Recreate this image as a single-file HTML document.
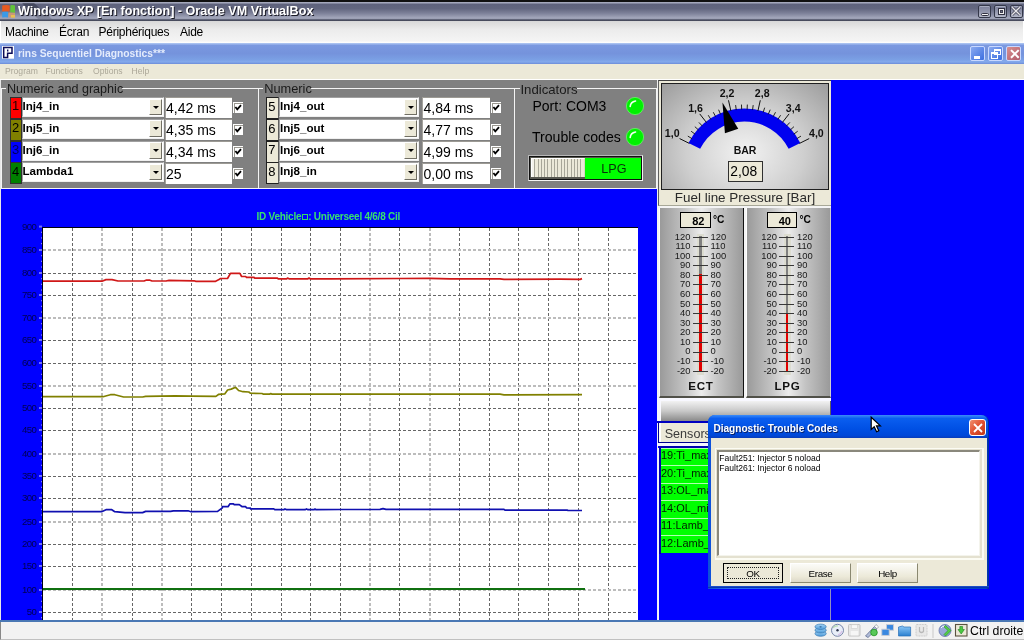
<!DOCTYPE html><html><head><meta charset="utf-8"><style>
html,body{margin:0;padding:0;width:1024px;height:640px;overflow:hidden;background:#0000ff;}
*{box-sizing:border-box;} body{position:relative;will-change:transform;font-family:'Liberation Sans',sans-serif;}
</style></head><body>
<div style="position:absolute;left:0px;top:0px;width:1024px;height:2px;background:#101010;"></div>
<div style="position:absolute;left:0px;top:2px;width:1024px;height:19px;background:linear-gradient(#a4a8bc 0%,#a4a8bc 6%,#5e627c 10%,#62667f 35%,#7e829a 60%,#a6aabe 86%,#585c70 93%,#3e4252 100%);"></div>
<div style="position:absolute;left:0;top:3px;width:70px;height:16px;background:linear-gradient(rgba(30,34,50,0.45),rgba(30,34,50,0.2));clip-path:polygon(22px 0,34px 0,52px 100%,38px 100%);"></div>
<svg style="position:absolute;left:0;top:0" width="18" height="20"><path d="M2.2 5.6 Q6 4.6 9.8 5.4 L9.6 11.4 Q6 10.8 2.2 11.6Z" fill="#e85a20"/><path d="M10.4 5.2 Q13 4.8 15 5.4 L15 13 Q13 12.4 10.2 12.6Z" fill="#62c43a"/><path d="M2.2 12 Q5 11.4 8 12 L8 17.6 Q5 17 2.2 17.6Z" fill="#3a9ae8"/><path d="M8.4 12.4 L15 12.8 L15 17.6 L8.4 17.6Z" fill="#c89878"/><path d="M11 15 L15 15 L15 17.6 L11 17.6Z" fill="#e8c050"/></svg>
<div style="position:absolute;left:18px;top:4.5px;font-size:12.6px;line-height:1;color:#ffffff;font-weight:bold;white-space:nowrap;text-shadow:1px 1px 0.6px #1a1a24;">Windows XP [En fonction] - Oracle VM VirtualBox</div>
<div style="position:absolute;left:977.5px;top:4.5px;width:13.5px;height:13.5px;background:linear-gradient(#7c809a,#9498ae 55%,#b4b8c8);border:1px solid #34384a;border-radius:2px;box-shadow:inset 0 1px 0 #a8acc0;"><div style="position:absolute;left:2.6px;top:7.2px;width:7.6px;height:3px;background:#f4f4f4;border:0.8px solid #303040;border-radius:1.5px;"></div></div>
<div style="position:absolute;left:993.5px;top:4.5px;width:13.5px;height:13.5px;background:linear-gradient(#7c809a,#9498ae 55%,#b4b8c8);border:1px solid #34384a;border-radius:2px;box-shadow:inset 0 1px 0 #a8acc0;"><div style="position:absolute;left:3px;top:2px;width:7.5px;height:7.5px;border:0.8px solid #303040;background:#f0f0f0;"><div style="position:absolute;left:1.2px;top:1.2px;right:1.2px;bottom:1.2px;background:#6a6e84;border:0.6px solid #404050;"></div></div></div>
<div style="position:absolute;left:1009.5px;top:4.5px;width:13.5px;height:13.5px;background:linear-gradient(#7c809a,#9498ae 55%,#b4b8c8);border:1px solid #34384a;border-radius:2px;box-shadow:inset 0 1px 0 #a8acc0;"><svg style="position:absolute;left:-0.2px;top:-0.2px" width="12" height="12"><path d="M2.2 2.2 L9.8 9.8 M9.8 2.2 L2.2 9.8" stroke="#404050" stroke-width="2.8"/><path d="M2.2 2.2 L9.8 9.8 M9.8 2.2 L2.2 9.8" stroke="#e8e8ec" stroke-width="1.3"/></svg></div>
<div style="position:absolute;left:0px;top:21px;width:1024px;height:22px;background:linear-gradient(#d8d8d8,#ececec 40%,#f4f4f4 90%,#ffffff);border-left:1px solid #fff;border-right:1px solid #fff;"></div>
<div style="position:absolute;left:5px;top:26.3px;font-size:12px;line-height:1;color:#000;font-weight:normal;white-space:nowrap;letter-spacing:-0.25px;">Machine</div>
<div style="position:absolute;left:59px;top:26.3px;font-size:12px;line-height:1;color:#000;font-weight:normal;white-space:nowrap;letter-spacing:-0.25px;">Écran</div>
<div style="position:absolute;left:98.5px;top:26.3px;font-size:12px;line-height:1;color:#000;font-weight:normal;white-space:nowrap;letter-spacing:-0.25px;">Périphériques</div>
<div style="position:absolute;left:180px;top:26.3px;font-size:12px;line-height:1;color:#000;font-weight:normal;white-space:nowrap;letter-spacing:-0.25px;">Aide</div>
<div style="position:absolute;left:0px;top:43px;width:1024px;height:21px;background:linear-gradient(#b4cbf4 0%,#7a98e0 12%,#7593dc 50%,#7a9fe4 78%,#84aaec 90%,#6c8cd8 100%);"></div>
<svg style="position:absolute;left:0;top:42px" width="16" height="20"><rect x="2" y="4" width="12" height="12.7" fill="#fff"/><path d="M3.7 5.6 L12 5.6 L12 11.2 L7.6 11.2 L7.6 15.4 L3.7 15.4 Z" fill="#fff" stroke="#0c0c58" stroke-width="1.5"/><rect x="7" y="7.5" width="1.4" height="2" fill="#0c0c58"/></svg>
<div style="position:absolute;left:18px;top:49.3px;font-size:10.3px;line-height:1;color:#e4ecfc;font-weight:bold;white-space:nowrap;">rins Sequentiel Diagnostics***</div>
<div style="position:absolute;left:970px;top:46px;width:15px;height:15px;background:linear-gradient(135deg,#8aaaf0,#3d6fe0);border:1px solid #c8d8ff;border-radius:2px;"><div style="position:absolute;left:3px;top:9px;width:6px;height:3px;background:#fff;"></div></div>
<div style="position:absolute;left:988px;top:46px;width:15px;height:15px;background:linear-gradient(135deg,#8aaaf0,#3d6fe0);border:1px solid #c8d8ff;border-radius:2px;"><div style="position:absolute;left:5px;top:2px;width:7px;height:6px;border:1px solid #fff;border-top-width:2px;"></div><div style="position:absolute;left:2px;top:5px;width:7px;height:7px;border:1px solid #fff;border-top-width:2px;background:transparent;"></div></div>
<div style="position:absolute;left:1006px;top:46px;width:15px;height:15px;background:linear-gradient(135deg,#d89090,#b05a6a);border:1px solid #c8d8ff;border-radius:2px;"><div style="position:absolute;left:0;top:0px;width:15px;font-size:14px;color:#fff;text-align:center;line-height:15px;font-weight:bold;">✕</div></div>
<div style="position:absolute;left:0px;top:64px;width:1024px;height:16px;background:#ece9d8;border-bottom:1px solid #fff;"></div>
<div style="position:absolute;left:5px;top:67px;font-size:8.6px;line-height:1;color:#aca899;font-weight:normal;white-space:nowrap;">Program</div>
<div style="position:absolute;left:45.5px;top:67px;font-size:8.6px;line-height:1;color:#aca899;font-weight:normal;white-space:nowrap;">Functions</div>
<div style="position:absolute;left:93px;top:67px;font-size:8.6px;line-height:1;color:#aca899;font-weight:normal;white-space:nowrap;">Options</div>
<div style="position:absolute;left:131.5px;top:67px;font-size:8.6px;line-height:1;color:#aca899;font-weight:normal;white-space:nowrap;">Help</div>
<div style="position:absolute;left:1px;top:80px;width:657px;height:109px;background:#808080;"></div>
<div style="position:absolute;left:1px;top:187.8px;width:657px;height:1.7px;background:#f4f4f8;"></div>
<div style="position:absolute;left:0px;top:80px;width:1px;height:540px;background:#e8e8e8;"></div>
<div style="position:absolute;left:1px;top:88px;width:656px;height:1px;background:#f4f4f4;"></div>
<div style="position:absolute;left:1px;top:88px;width:1px;height:100px;background:#f4f4f4;"></div>
<div style="position:absolute;left:258px;top:88px;width:1px;height:100px;background:#f4f4f4;"></div>
<div style="position:absolute;left:514px;top:88px;width:1px;height:100px;background:#f4f4f4;"></div>
<div style="position:absolute;left:656px;top:88px;width:1px;height:100px;background:#f4f4f4;"></div>
<div style="position:absolute;left:6px;top:86px;width:116px;height:4px;background:#808080;"></div>
<div style="position:absolute;left:262.5px;top:86px;width:48.5px;height:4px;background:#808080;"></div>
<div style="position:absolute;left:519.5px;top:86px;width:57.0px;height:4px;background:#808080;"></div>
<div style="position:absolute;left:7px;top:82.6px;font-size:12.6px;line-height:1;color:#1a1a1a;font-weight:normal;white-space:nowrap;">Numeric and graphic</div>
<div style="position:absolute;left:264.2px;top:82.6px;font-size:12.8px;line-height:1;color:#1a1a1a;font-weight:normal;white-space:nowrap;">Numeric</div>
<div style="position:absolute;left:520.4px;top:82.6px;font-size:13.2px;line-height:1;color:#1a1a1a;font-weight:normal;white-space:nowrap;">Indicators</div>
<div style="position:absolute;left:9.5px;top:97.2px;width:12.5px;height:22.2px;background:#ff0000;border:1px solid #303030;"><div style="position:absolute;left:1.5px;top:1.3px;font-size:13px;line-height:1;color:#200000;">1</div></div>
<div style="position:absolute;left:21.5px;top:97.2px;width:142px;height:20px;background:#fff;border-top:1px solid #a0a0a0;border-left:1px solid #a0a0a0;border-bottom:1px solid #f0f0f0;border-right:1px solid #f0f0f0;"></div>
<div style="position:absolute;left:22.5px;top:100.3px;font-size:11.6px;line-height:1;color:#000;font-weight:bold;white-space:nowrap;">Inj4_in</div>
<div style="position:absolute;left:148.5px;top:98.7px;width:13px;height:16.5px;background:#ece9d8;border-top:1px solid #fff;border-left:1px solid #fff;border-bottom:1px solid #716f64;border-right:1px solid #716f64;"><div style="position:absolute;left:3px;top:6px;width:0;height:0;border-left:3px solid transparent;border-right:3px solid transparent;border-top:3px solid #000;"></div></div>
<div style="position:absolute;left:164.5px;top:97.3px;width:67.5px;height:20.6px;background:#fff;border-top:1.6px solid #9c9a94;border-left:1.4px solid #a4a29c;"></div>
<div style="position:absolute;left:166.0px;top:100.8px;font-size:14px;line-height:1;color:#000;font-weight:normal;white-space:nowrap;">4,42 ms</div>
<div style="position:absolute;left:233px;top:102.3px;width:10px;height:11px;background:#fff;box-shadow:inset 1px 1px 0 #fff,inset 2px 2px 0 #9a9890;"><svg style="position:absolute;left:0;top:0" width="10" height="11"><path d="M2.4 5 L4.3 7.3 L8 3.2" stroke="#000" stroke-width="1.8" fill="none"/></svg></div>
<div style="position:absolute;left:266px;top:97.2px;width:13px;height:22.2px;background:#ece9d8;border:1px solid #202020;border-right-color:#606060;"><div style="position:absolute;left:1.2px;top:1.8px;font-size:13px;line-height:1;color:#000;">5</div></div>
<div style="position:absolute;left:279px;top:97.2px;width:140px;height:20px;background:#fff;border-top:1px solid #a0a0a0;border-left:1px solid #a0a0a0;border-bottom:1px solid #f0f0f0;border-right:1px solid #f0f0f0;"></div>
<div style="position:absolute;left:280px;top:100.3px;font-size:11.6px;line-height:1;color:#000;font-weight:bold;white-space:nowrap;">Inj4_out</div>
<div style="position:absolute;left:404px;top:98.7px;width:13px;height:16.5px;background:#ece9d8;border-top:1px solid #fff;border-left:1px solid #fff;border-bottom:1px solid #716f64;border-right:1px solid #716f64;"><div style="position:absolute;left:3px;top:6px;width:0;height:0;border-left:3px solid transparent;border-right:3px solid transparent;border-top:3px solid #000;"></div></div>
<div style="position:absolute;left:422px;top:97.3px;width:67.5px;height:20.6px;background:#fff;border-top:1.6px solid #9c9a94;border-left:1.4px solid #a4a29c;"></div>
<div style="position:absolute;left:423.5px;top:100.8px;font-size:14px;line-height:1;color:#000;font-weight:normal;white-space:nowrap;">4,84 ms</div>
<div style="position:absolute;left:491px;top:101.7px;width:10px;height:11px;background:#fff;box-shadow:inset 1px 1px 0 #fff,inset 2px 2px 0 #9a9890;"><svg style="position:absolute;left:0;top:0" width="10" height="11"><path d="M2.4 5 L4.3 7.3 L8 3.2" stroke="#000" stroke-width="1.8" fill="none"/></svg></div>
<div style="position:absolute;left:9.5px;top:118.9px;width:12.5px;height:22.2px;background:#808000;border:1px solid #303030;"><div style="position:absolute;left:1.5px;top:1.3px;font-size:13px;line-height:1;color:#000;">2</div></div>
<div style="position:absolute;left:21.5px;top:118.9px;width:142px;height:20px;background:#fff;border-top:1px solid #a0a0a0;border-left:1px solid #a0a0a0;border-bottom:1px solid #f0f0f0;border-right:1px solid #f0f0f0;"></div>
<div style="position:absolute;left:22.5px;top:122.0px;font-size:11.6px;line-height:1;color:#000;font-weight:bold;white-space:nowrap;">Inj5_in</div>
<div style="position:absolute;left:148.5px;top:120.4px;width:13px;height:16.5px;background:#ece9d8;border-top:1px solid #fff;border-left:1px solid #fff;border-bottom:1px solid #716f64;border-right:1px solid #716f64;"><div style="position:absolute;left:3px;top:6px;width:0;height:0;border-left:3px solid transparent;border-right:3px solid transparent;border-top:3px solid #000;"></div></div>
<div style="position:absolute;left:164.5px;top:119.3px;width:67.5px;height:20.6px;background:#fff;border-top:1.6px solid #9c9a94;border-left:1.4px solid #a4a29c;"></div>
<div style="position:absolute;left:166.0px;top:122.8px;font-size:14px;line-height:1;color:#000;font-weight:normal;white-space:nowrap;">4,35 ms</div>
<div style="position:absolute;left:233px;top:124.3px;width:10px;height:11px;background:#fff;box-shadow:inset 1px 1px 0 #fff,inset 2px 2px 0 #9a9890;"><svg style="position:absolute;left:0;top:0" width="10" height="11"><path d="M2.4 5 L4.3 7.3 L8 3.2" stroke="#000" stroke-width="1.8" fill="none"/></svg></div>
<div style="position:absolute;left:266px;top:118.9px;width:13px;height:22.2px;background:#ece9d8;border:1px solid #202020;border-right-color:#606060;"><div style="position:absolute;left:1.2px;top:1.8px;font-size:13px;line-height:1;color:#000;">6</div></div>
<div style="position:absolute;left:279px;top:118.9px;width:140px;height:20px;background:#fff;border-top:1px solid #a0a0a0;border-left:1px solid #a0a0a0;border-bottom:1px solid #f0f0f0;border-right:1px solid #f0f0f0;"></div>
<div style="position:absolute;left:280px;top:122.0px;font-size:11.6px;line-height:1;color:#000;font-weight:bold;white-space:nowrap;">Inj5_out</div>
<div style="position:absolute;left:404px;top:120.4px;width:13px;height:16.5px;background:#ece9d8;border-top:1px solid #fff;border-left:1px solid #fff;border-bottom:1px solid #716f64;border-right:1px solid #716f64;"><div style="position:absolute;left:3px;top:6px;width:0;height:0;border-left:3px solid transparent;border-right:3px solid transparent;border-top:3px solid #000;"></div></div>
<div style="position:absolute;left:422px;top:119.3px;width:67.5px;height:20.6px;background:#fff;border-top:1.6px solid #9c9a94;border-left:1.4px solid #a4a29c;"></div>
<div style="position:absolute;left:423.5px;top:122.8px;font-size:14px;line-height:1;color:#000;font-weight:normal;white-space:nowrap;">4,77 ms</div>
<div style="position:absolute;left:491px;top:123.7px;width:10px;height:11px;background:#fff;box-shadow:inset 1px 1px 0 #fff,inset 2px 2px 0 #9a9890;"><svg style="position:absolute;left:0;top:0" width="10" height="11"><path d="M2.4 5 L4.3 7.3 L8 3.2" stroke="#000" stroke-width="1.8" fill="none"/></svg></div>
<div style="position:absolute;left:9.5px;top:140.6px;width:12.5px;height:22.2px;background:#0000ff;border:1px solid #303030;"><div style="position:absolute;left:1.5px;top:1.3px;font-size:13px;line-height:1;color:#000060;">3</div></div>
<div style="position:absolute;left:21.5px;top:140.6px;width:142px;height:20px;background:#fff;border-top:1px solid #a0a0a0;border-left:1px solid #a0a0a0;border-bottom:1px solid #f0f0f0;border-right:1px solid #f0f0f0;"></div>
<div style="position:absolute;left:22.5px;top:143.7px;font-size:11.6px;line-height:1;color:#000;font-weight:bold;white-space:nowrap;">Inj6_in</div>
<div style="position:absolute;left:148.5px;top:142.1px;width:13px;height:16.5px;background:#ece9d8;border-top:1px solid #fff;border-left:1px solid #fff;border-bottom:1px solid #716f64;border-right:1px solid #716f64;"><div style="position:absolute;left:3px;top:6px;width:0;height:0;border-left:3px solid transparent;border-right:3px solid transparent;border-top:3px solid #000;"></div></div>
<div style="position:absolute;left:164.5px;top:141.3px;width:67.5px;height:20.6px;background:#fff;border-top:1.6px solid #9c9a94;border-left:1.4px solid #a4a29c;"></div>
<div style="position:absolute;left:166.0px;top:144.8px;font-size:14px;line-height:1;color:#000;font-weight:normal;white-space:nowrap;">4,34 ms</div>
<div style="position:absolute;left:233px;top:146.3px;width:10px;height:11px;background:#fff;box-shadow:inset 1px 1px 0 #fff,inset 2px 2px 0 #9a9890;"><svg style="position:absolute;left:0;top:0" width="10" height="11"><path d="M2.4 5 L4.3 7.3 L8 3.2" stroke="#000" stroke-width="1.8" fill="none"/></svg></div>
<div style="position:absolute;left:266px;top:140.6px;width:13px;height:22.2px;background:#ece9d8;border:1px solid #202020;border-right-color:#606060;"><div style="position:absolute;left:1.2px;top:1.8px;font-size:13px;line-height:1;color:#000;">7</div></div>
<div style="position:absolute;left:279px;top:140.6px;width:140px;height:20px;background:#fff;border-top:1px solid #a0a0a0;border-left:1px solid #a0a0a0;border-bottom:1px solid #f0f0f0;border-right:1px solid #f0f0f0;"></div>
<div style="position:absolute;left:280px;top:143.7px;font-size:11.6px;line-height:1;color:#000;font-weight:bold;white-space:nowrap;">Inj6_out</div>
<div style="position:absolute;left:404px;top:142.1px;width:13px;height:16.5px;background:#ece9d8;border-top:1px solid #fff;border-left:1px solid #fff;border-bottom:1px solid #716f64;border-right:1px solid #716f64;"><div style="position:absolute;left:3px;top:6px;width:0;height:0;border-left:3px solid transparent;border-right:3px solid transparent;border-top:3px solid #000;"></div></div>
<div style="position:absolute;left:422px;top:141.3px;width:67.5px;height:20.6px;background:#fff;border-top:1.6px solid #9c9a94;border-left:1.4px solid #a4a29c;"></div>
<div style="position:absolute;left:423.5px;top:144.8px;font-size:14px;line-height:1;color:#000;font-weight:normal;white-space:nowrap;">4,99 ms</div>
<div style="position:absolute;left:491px;top:145.70000000000002px;width:10px;height:11px;background:#fff;box-shadow:inset 1px 1px 0 #fff,inset 2px 2px 0 #9a9890;"><svg style="position:absolute;left:0;top:0" width="10" height="11"><path d="M2.4 5 L4.3 7.3 L8 3.2" stroke="#000" stroke-width="1.8" fill="none"/></svg></div>
<div style="position:absolute;left:9.5px;top:162.3px;width:12.5px;height:22.2px;background:#008000;border:1px solid #303030;"><div style="position:absolute;left:1.5px;top:1.3px;font-size:13px;line-height:1;color:#000;">4</div></div>
<div style="position:absolute;left:21.5px;top:162.3px;width:142px;height:20px;background:#fff;border-top:1px solid #a0a0a0;border-left:1px solid #a0a0a0;border-bottom:1px solid #f0f0f0;border-right:1px solid #f0f0f0;"></div>
<div style="position:absolute;left:22.5px;top:165.4px;font-size:11.6px;line-height:1;color:#000;font-weight:bold;white-space:nowrap;">Lambda1</div>
<div style="position:absolute;left:148.5px;top:163.8px;width:13px;height:16.5px;background:#ece9d8;border-top:1px solid #fff;border-left:1px solid #fff;border-bottom:1px solid #716f64;border-right:1px solid #716f64;"><div style="position:absolute;left:3px;top:6px;width:0;height:0;border-left:3px solid transparent;border-right:3px solid transparent;border-top:3px solid #000;"></div></div>
<div style="position:absolute;left:164.5px;top:163.3px;width:67.5px;height:20.6px;background:#fff;border-top:1.6px solid #9c9a94;border-left:1.4px solid #a4a29c;"></div>
<div style="position:absolute;left:166.0px;top:166.8px;font-size:14px;line-height:1;color:#000;font-weight:normal;white-space:nowrap;">25</div>
<div style="position:absolute;left:233px;top:168.3px;width:10px;height:11px;background:#fff;box-shadow:inset 1px 1px 0 #fff,inset 2px 2px 0 #9a9890;"><svg style="position:absolute;left:0;top:0" width="10" height="11"><path d="M2.4 5 L4.3 7.3 L8 3.2" stroke="#000" stroke-width="1.8" fill="none"/></svg></div>
<div style="position:absolute;left:266px;top:162.3px;width:13px;height:22.2px;background:#ece9d8;border:1px solid #202020;border-right-color:#606060;"><div style="position:absolute;left:1.2px;top:1.8px;font-size:13px;line-height:1;color:#000;">8</div></div>
<div style="position:absolute;left:279px;top:162.3px;width:140px;height:20px;background:#fff;border-top:1px solid #a0a0a0;border-left:1px solid #a0a0a0;border-bottom:1px solid #f0f0f0;border-right:1px solid #f0f0f0;"></div>
<div style="position:absolute;left:280px;top:165.4px;font-size:11.6px;line-height:1;color:#000;font-weight:bold;white-space:nowrap;">Inj8_in</div>
<div style="position:absolute;left:404px;top:163.8px;width:13px;height:16.5px;background:#ece9d8;border-top:1px solid #fff;border-left:1px solid #fff;border-bottom:1px solid #716f64;border-right:1px solid #716f64;"><div style="position:absolute;left:3px;top:6px;width:0;height:0;border-left:3px solid transparent;border-right:3px solid transparent;border-top:3px solid #000;"></div></div>
<div style="position:absolute;left:422px;top:163.3px;width:67.5px;height:20.6px;background:#fff;border-top:1.6px solid #9c9a94;border-left:1.4px solid #a4a29c;"></div>
<div style="position:absolute;left:423.5px;top:166.8px;font-size:14px;line-height:1;color:#000;font-weight:normal;white-space:nowrap;">0,00 ms</div>
<div style="position:absolute;left:491px;top:167.70000000000002px;width:10px;height:11px;background:#fff;box-shadow:inset 1px 1px 0 #fff,inset 2px 2px 0 #9a9890;"><svg style="position:absolute;left:0;top:0" width="10" height="11"><path d="M2.4 5 L4.3 7.3 L8 3.2" stroke="#000" stroke-width="1.8" fill="none"/></svg></div>
<div style="position:absolute;left:532.5px;top:99px;font-size:14px;line-height:1;color:#000;font-weight:normal;white-space:nowrap;">Port: COM3</div>
<div style="position:absolute;left:532px;top:129.5px;font-size:14.1px;line-height:1;color:#000;font-weight:normal;white-space:nowrap;">Trouble codes</div>
<svg style="position:absolute;left:625px;top:95.6px" width="20" height="20"><circle cx="10" cy="10" r="8.6" fill="#00f000" stroke="#60ff60" stroke-width="0.8"/><path d="M5.2 10.5 Q5.5 6 10.5 5" stroke="#f0fff0" stroke-width="1.6" fill="none" stroke-linecap="round"/></svg>
<svg style="position:absolute;left:625px;top:126.9px" width="20" height="20"><circle cx="10" cy="10" r="8.6" fill="#00f000" stroke="#60ff60" stroke-width="0.8"/><path d="M5.2 10.5 Q5.5 6 10.5 5" stroke="#f0fff0" stroke-width="1.6" fill="none" stroke-linecap="round"/></svg>
<div style="position:absolute;left:528px;top:155px;width:115px;height:26px;background:#101010;border-top:1px solid #b8b8b8;border-left:1px solid #b8b8b8;border-bottom:1px solid #f4f4f4;border-right:1px solid #f4f4f4;"></div>
<div style="position:absolute;left:530px;top:157px;width:111px;height:22px;background:#585850;"></div>
<div style="position:absolute;left:531px;top:157.5px;width:54px;height:19.5px;background:repeating-linear-gradient(90deg,#ece9d8 0,#ece9d8 2.3px,#a8a698 2.3px,#a8a698 3.3px);border-top:1.5px solid #fff;border-left:1.5px solid #fff;border-right:1px solid #d8d4c4;"><div style="position:absolute;left:0;top:0;width:2px;height:100%;background:#f4f2ea;"></div><div style="position:absolute;right:0;top:0;width:3px;height:100%;background:#ece9d8;"></div></div>
<div style="position:absolute;left:585px;top:157.5px;width:56px;height:21px;background:#00ff00;"></div>
<div style="position:absolute;left:601.3px;top:161.6px;font-size:12.6px;line-height:1;color:#0a300a;font-weight:normal;white-space:nowrap;transform:scaleY(1.08);transform-origin:0 0;">LPG</div>
<div style="position:absolute;left:1px;top:189px;width:656px;height:431px;background:#0000ff;"></div>
<div style="position:absolute;left:256.5px;top:211.8px;font-size:10px;line-height:1;color:#38e070;font-weight:bold;white-space:nowrap;letter-spacing:-0.25px;">ID Vehicle<span style="display:inline-block;width:6px;height:6px;border:1px solid #33dd66;margin:0 0.5px;vertical-align:0px;"></span>: Universeel 4/6/8 Cil</div>
<svg style="position:absolute;left:0;top:0" width="1024" height="640" viewBox="0 0 1024 640"><rect x="43" y="228" width="595" height="392" fill="#ffffff"/><rect x="42" y="227" width="1" height="393" fill="#000010"/><rect x="42" y="227" width="596" height="1" fill="#000010"/><line x1="72.5" y1="228" x2="72.5" y2="620" stroke="#666666" stroke-width="1" stroke-dasharray="3 2" shape-rendering="crispEdges"/><line x1="102" y1="228" x2="102" y2="620" stroke="#bcbcbc" stroke-width="2" stroke-dasharray="3 2" shape-rendering="crispEdges"/><line x1="132.5" y1="228" x2="132.5" y2="620" stroke="#666666" stroke-width="1" stroke-dasharray="3 2" shape-rendering="crispEdges"/><line x1="162" y1="228" x2="162" y2="620" stroke="#bcbcbc" stroke-width="2" stroke-dasharray="3 2" shape-rendering="crispEdges"/><line x1="191.5" y1="228" x2="191.5" y2="620" stroke="#666666" stroke-width="1" stroke-dasharray="3 2" shape-rendering="crispEdges"/><line x1="221.5" y1="228" x2="221.5" y2="620" stroke="#666666" stroke-width="1" stroke-dasharray="3 2" shape-rendering="crispEdges"/><line x1="251.5" y1="228" x2="251.5" y2="620" stroke="#666666" stroke-width="1" stroke-dasharray="3 2" shape-rendering="crispEdges"/><line x1="281.5" y1="228" x2="281.5" y2="620" stroke="#666666" stroke-width="1" stroke-dasharray="3 2" shape-rendering="crispEdges"/><line x1="310.5" y1="228" x2="310.5" y2="620" stroke="#666666" stroke-width="1" stroke-dasharray="3 2" shape-rendering="crispEdges"/><line x1="340.5" y1="228" x2="340.5" y2="620" stroke="#666666" stroke-width="1" stroke-dasharray="3 2" shape-rendering="crispEdges"/><line x1="370" y1="228" x2="370" y2="620" stroke="#bcbcbc" stroke-width="2" stroke-dasharray="3 2" shape-rendering="crispEdges"/><line x1="399.5" y1="228" x2="399.5" y2="620" stroke="#666666" stroke-width="1" stroke-dasharray="3 2" shape-rendering="crispEdges"/><line x1="430" y1="228" x2="430" y2="620" stroke="#bcbcbc" stroke-width="2" stroke-dasharray="3 2" shape-rendering="crispEdges"/><line x1="459.5" y1="228" x2="459.5" y2="620" stroke="#666666" stroke-width="1" stroke-dasharray="3 2" shape-rendering="crispEdges"/><line x1="489.5" y1="228" x2="489.5" y2="620" stroke="#666666" stroke-width="1" stroke-dasharray="3 2" shape-rendering="crispEdges"/><line x1="518.5" y1="228" x2="518.5" y2="620" stroke="#666666" stroke-width="1" stroke-dasharray="3 2" shape-rendering="crispEdges"/><line x1="548.5" y1="228" x2="548.5" y2="620" stroke="#666666" stroke-width="1" stroke-dasharray="3 2" shape-rendering="crispEdges"/><line x1="578.5" y1="228" x2="578.5" y2="620" stroke="#666666" stroke-width="1" stroke-dasharray="3 2" shape-rendering="crispEdges"/><line x1="608.5" y1="228" x2="608.5" y2="620" stroke="#666666" stroke-width="1" stroke-dasharray="3 2" shape-rendering="crispEdges"/><line x1="43" y1="250" x2="638" y2="250" stroke="#bcbcbc" stroke-width="2" stroke-dasharray="3 2" shape-rendering="crispEdges"/><line x1="43" y1="273.5" x2="638" y2="273.5" stroke="#666666" stroke-width="1" stroke-dasharray="3 2" shape-rendering="crispEdges"/><line x1="43" y1="295.5" x2="638" y2="295.5" stroke="#666666" stroke-width="1" stroke-dasharray="3 2" shape-rendering="crispEdges"/><line x1="43" y1="318" x2="638" y2="318" stroke="#bcbcbc" stroke-width="2" stroke-dasharray="3 2" shape-rendering="crispEdges"/><line x1="43" y1="340.5" x2="638" y2="340.5" stroke="#666666" stroke-width="1" stroke-dasharray="3 2" shape-rendering="crispEdges"/><line x1="43" y1="363.5" x2="638" y2="363.5" stroke="#666666" stroke-width="1" stroke-dasharray="3 2" shape-rendering="crispEdges"/><line x1="43" y1="386" x2="638" y2="386" stroke="#bcbcbc" stroke-width="2" stroke-dasharray="3 2" shape-rendering="crispEdges"/><line x1="43" y1="408.5" x2="638" y2="408.5" stroke="#666666" stroke-width="1" stroke-dasharray="3 2" shape-rendering="crispEdges"/><line x1="43" y1="430.5" x2="638" y2="430.5" stroke="#666666" stroke-width="1" stroke-dasharray="3 2" shape-rendering="crispEdges"/><line x1="43" y1="454" x2="638" y2="454" stroke="#bcbcbc" stroke-width="2" stroke-dasharray="3 2" shape-rendering="crispEdges"/><line x1="43" y1="476.5" x2="638" y2="476.5" stroke="#666666" stroke-width="1" stroke-dasharray="3 2" shape-rendering="crispEdges"/><line x1="43" y1="498.5" x2="638" y2="498.5" stroke="#666666" stroke-width="1" stroke-dasharray="3 2" shape-rendering="crispEdges"/><line x1="43" y1="522" x2="638" y2="522" stroke="#bcbcbc" stroke-width="2" stroke-dasharray="3 2" shape-rendering="crispEdges"/><line x1="43" y1="544.5" x2="638" y2="544.5" stroke="#666666" stroke-width="1" stroke-dasharray="3 2" shape-rendering="crispEdges"/><line x1="43" y1="566.5" x2="638" y2="566.5" stroke="#666666" stroke-width="1" stroke-dasharray="3 2" shape-rendering="crispEdges"/><line x1="43" y1="590" x2="638" y2="590" stroke="#bcbcbc" stroke-width="2" stroke-dasharray="3 2" shape-rendering="crispEdges"/><line x1="43" y1="612.5" x2="638" y2="612.5" stroke="#666666" stroke-width="1" stroke-dasharray="3 2" shape-rendering="crispEdges"/><text x="36.4" y="230.00" text-anchor="end" font-family="Liberation Sans" font-size="9.6" letter-spacing="-0.5" fill="#000050">900</text><rect x="39" y="225.60" width="3" height="2" fill="#7070ff"/><rect x="41" y="231.67" width="1" height="1.2" fill="#8888ff"/><rect x="41" y="237.34" width="1" height="1.2" fill="#8888ff"/><rect x="41" y="243.01" width="1" height="1.2" fill="#8888ff"/><text x="36.4" y="253.40" text-anchor="end" font-family="Liberation Sans" font-size="9.6" letter-spacing="-0.5" fill="#000050">850</text><rect x="39" y="249.00" width="3" height="2" fill="#7070ff"/><rect x="41" y="255.07" width="1" height="1.2" fill="#8888ff"/><rect x="41" y="260.74" width="1" height="1.2" fill="#8888ff"/><rect x="41" y="266.41" width="1" height="1.2" fill="#8888ff"/><text x="36.4" y="276.40" text-anchor="end" font-family="Liberation Sans" font-size="9.6" letter-spacing="-0.5" fill="#000050">800</text><rect x="39" y="272.00" width="3" height="2" fill="#7070ff"/><rect x="41" y="278.07" width="1" height="1.2" fill="#8888ff"/><rect x="41" y="283.74" width="1" height="1.2" fill="#8888ff"/><rect x="41" y="289.41" width="1" height="1.2" fill="#8888ff"/><text x="36.4" y="298.40" text-anchor="end" font-family="Liberation Sans" font-size="9.6" letter-spacing="-0.5" fill="#000050">750</text><rect x="39" y="294.00" width="3" height="2" fill="#7070ff"/><rect x="41" y="300.07" width="1" height="1.2" fill="#8888ff"/><rect x="41" y="305.74" width="1" height="1.2" fill="#8888ff"/><rect x="41" y="311.41" width="1" height="1.2" fill="#8888ff"/><text x="36.4" y="321.40" text-anchor="end" font-family="Liberation Sans" font-size="9.6" letter-spacing="-0.5" fill="#000050">700</text><rect x="39" y="317.00" width="3" height="2" fill="#7070ff"/><rect x="41" y="323.07" width="1" height="1.2" fill="#8888ff"/><rect x="41" y="328.74" width="1" height="1.2" fill="#8888ff"/><rect x="41" y="334.41" width="1" height="1.2" fill="#8888ff"/><text x="36.4" y="343.40" text-anchor="end" font-family="Liberation Sans" font-size="9.6" letter-spacing="-0.5" fill="#000050">650</text><rect x="39" y="339.00" width="3" height="2" fill="#7070ff"/><rect x="41" y="345.07" width="1" height="1.2" fill="#8888ff"/><rect x="41" y="350.74" width="1" height="1.2" fill="#8888ff"/><rect x="41" y="356.41" width="1" height="1.2" fill="#8888ff"/><text x="36.4" y="366.40" text-anchor="end" font-family="Liberation Sans" font-size="9.6" letter-spacing="-0.5" fill="#000050">600</text><rect x="39" y="362.00" width="3" height="2" fill="#7070ff"/><rect x="41" y="368.07" width="1" height="1.2" fill="#8888ff"/><rect x="41" y="373.74" width="1" height="1.2" fill="#8888ff"/><rect x="41" y="379.41" width="1" height="1.2" fill="#8888ff"/><text x="36.4" y="389.40" text-anchor="end" font-family="Liberation Sans" font-size="9.6" letter-spacing="-0.5" fill="#000050">550</text><rect x="39" y="385.00" width="3" height="2" fill="#7070ff"/><rect x="41" y="391.07" width="1" height="1.2" fill="#8888ff"/><rect x="41" y="396.74" width="1" height="1.2" fill="#8888ff"/><rect x="41" y="402.41" width="1" height="1.2" fill="#8888ff"/><text x="36.4" y="411.40" text-anchor="end" font-family="Liberation Sans" font-size="9.6" letter-spacing="-0.5" fill="#000050">500</text><rect x="39" y="407.00" width="3" height="2" fill="#7070ff"/><rect x="41" y="413.07" width="1" height="1.2" fill="#8888ff"/><rect x="41" y="418.74" width="1" height="1.2" fill="#8888ff"/><rect x="41" y="424.41" width="1" height="1.2" fill="#8888ff"/><text x="36.4" y="433.40" text-anchor="end" font-family="Liberation Sans" font-size="9.6" letter-spacing="-0.5" fill="#000050">450</text><rect x="39" y="429.00" width="3" height="2" fill="#7070ff"/><rect x="41" y="435.07" width="1" height="1.2" fill="#8888ff"/><rect x="41" y="440.74" width="1" height="1.2" fill="#8888ff"/><rect x="41" y="446.41" width="1" height="1.2" fill="#8888ff"/><text x="36.4" y="457.40" text-anchor="end" font-family="Liberation Sans" font-size="9.6" letter-spacing="-0.5" fill="#000050">400</text><rect x="39" y="453.00" width="3" height="2" fill="#7070ff"/><rect x="41" y="459.07" width="1" height="1.2" fill="#8888ff"/><rect x="41" y="464.74" width="1" height="1.2" fill="#8888ff"/><rect x="41" y="470.41" width="1" height="1.2" fill="#8888ff"/><text x="36.4" y="479.40" text-anchor="end" font-family="Liberation Sans" font-size="9.6" letter-spacing="-0.5" fill="#000050">350</text><rect x="39" y="475.00" width="3" height="2" fill="#7070ff"/><rect x="41" y="481.07" width="1" height="1.2" fill="#8888ff"/><rect x="41" y="486.74" width="1" height="1.2" fill="#8888ff"/><rect x="41" y="492.41" width="1" height="1.2" fill="#8888ff"/><text x="36.4" y="501.40" text-anchor="end" font-family="Liberation Sans" font-size="9.6" letter-spacing="-0.5" fill="#000050">300</text><rect x="39" y="497.00" width="3" height="2" fill="#7070ff"/><rect x="41" y="503.07" width="1" height="1.2" fill="#8888ff"/><rect x="41" y="508.74" width="1" height="1.2" fill="#8888ff"/><rect x="41" y="514.41" width="1" height="1.2" fill="#8888ff"/><text x="36.4" y="525.40" text-anchor="end" font-family="Liberation Sans" font-size="9.6" letter-spacing="-0.5" fill="#000050">250</text><rect x="39" y="521.00" width="3" height="2" fill="#7070ff"/><rect x="41" y="527.07" width="1" height="1.2" fill="#8888ff"/><rect x="41" y="532.74" width="1" height="1.2" fill="#8888ff"/><rect x="41" y="538.41" width="1" height="1.2" fill="#8888ff"/><text x="36.4" y="547.40" text-anchor="end" font-family="Liberation Sans" font-size="9.6" letter-spacing="-0.5" fill="#000050">200</text><rect x="39" y="543.00" width="3" height="2" fill="#7070ff"/><rect x="41" y="549.07" width="1" height="1.2" fill="#8888ff"/><rect x="41" y="554.74" width="1" height="1.2" fill="#8888ff"/><rect x="41" y="560.41" width="1" height="1.2" fill="#8888ff"/><text x="36.4" y="569.40" text-anchor="end" font-family="Liberation Sans" font-size="9.6" letter-spacing="-0.5" fill="#000050">150</text><rect x="39" y="565.00" width="3" height="2" fill="#7070ff"/><rect x="41" y="571.07" width="1" height="1.2" fill="#8888ff"/><rect x="41" y="576.74" width="1" height="1.2" fill="#8888ff"/><rect x="41" y="582.41" width="1" height="1.2" fill="#8888ff"/><text x="36.4" y="593.40" text-anchor="end" font-family="Liberation Sans" font-size="9.6" letter-spacing="-0.5" fill="#000050">100</text><rect x="39" y="589.00" width="3" height="2" fill="#7070ff"/><rect x="41" y="595.07" width="1" height="1.2" fill="#8888ff"/><rect x="41" y="600.74" width="1" height="1.2" fill="#8888ff"/><rect x="41" y="606.41" width="1" height="1.2" fill="#8888ff"/><text x="36.4" y="615.40" text-anchor="end" font-family="Liberation Sans" font-size="9.6" letter-spacing="-0.5" fill="#000050">50</text><rect x="39" y="611.00" width="3" height="2" fill="#7070ff"/><rect x="41" y="617.07" width="1" height="1.2" fill="#8888ff"/><polyline points="43,281.2 102,281.2 106,279.6 112,279.6 118,281 144,281 146,280.2 150,280.2 152,281 166,281 169,280.4 180,280.6 194,280.8 196,281.4 215.2,281.4 219,279.6 220.5,278.5 227.5,278.5 230.5,273.4 239.9,273.4 241.6,276.5 245.7,276.5 246.5,277.3 254,277.3 254.5,278.1 277.4,278.1 278,278.8 286.8,278.8 287.5,278 289,278.8 307.9,278.8 309,278 310.2,278.8 330,278.8 400,278.5 430,278.3 450,278.8 500,278.8 504,279.4 560,279.2 580,279.4 582,278.6" fill="none" stroke="#d01818" stroke-width="1.7" stroke-linejoin="round"/><polyline points="43,396.7 103,396.7 110.4,394.7 114.8,394.7 123.6,397 142.6,397 145.6,396.4 175,395.8 191,396.1 215.9,396.4 218.8,394.3 224.7,393.9 227.6,390 231.2,389.1 235.6,387.3 238.6,390.5 243,391.7 248.8,392 250.3,393.2 262,393.5 263.5,394.2 269.3,394.2 270.8,393.6 272.2,394.2 330,394.2 500,394.2 504,394.8 582,394.6" fill="none" stroke="#808000" stroke-width="1.7" stroke-linejoin="round"/><polyline points="43,511.7 101.6,511.7 106,509.7 111.8,509.7 114.8,511.7 125,512.6 142.6,512.6 145.6,511.4 170.5,511.4 173.4,510.8 188,510.8 191,511.7 217.6,511.4 222.3,507.9 222.3,506.7 228,506.7 230,503.8 233.4,503.8 234,504.6 239.3,504.6 242.2,506.7 245.7,506.7 246.5,507.9 250.4,508.2 250.6,508.9 273.8,508.9 275,509.7 284,509.7 285,508.9 286.7,509.7 305,509.7 306.5,508.9 308,509.7 314,509.7 315,509 316,509.7 340,509.5 380,509.3 383,508.6 386,509.3 504,509.3 505,510.2 567.5,510.2 568,510.5 582,510.5" fill="none" stroke="#1010b0" stroke-width="1.7" stroke-linejoin="round"/><rect x="43" y="588" width="542" height="2" fill="#107010"/></svg>
<div style="position:absolute;left:657px;top:80px;width:1px;height:541px;background:#f0f0f0;"></div>
<div style="position:absolute;left:658px;top:80px;width:173px;height:126px;background:#ece9d8;border-top:1px solid #404040;border-left:1px solid #606060;border-bottom:1px solid #a8a898;"></div>
<div style="position:absolute;left:661px;top:83px;width:168px;height:107px;background:radial-gradient(ellipse at 50% 65%,#f2f2f2 0%,#cfcfcf 50%,#9c9c9c 100%);border:1px solid #202020;"></div>
<div style="position:absolute;left:658px;top:206px;width:173px;height:2px;background:#f8f8f8;"></div>
<div style="position:absolute;left:657px;top:206px;width:174px;height:192px;background:#f4f4f4;"></div>
<div style="position:absolute;left:674.8px;top:191.2px;font-size:13.45px;line-height:1;color:#2a2a2a;font-weight:normal;white-space:nowrap;">Fuel line Pressure [Bar]</div>
<svg style="position:absolute;left:0;top:0" width="1024" height="640" viewBox="0 0 1024 640"><path d="M688.52,143.02 A62.5,62.5 0 0 1 800.28,143.02 L788.66,148.84 A49.5,49.5 0 0 0 700.14,148.84 Z" fill="#0000f0"/><line x1="689.41" y1="143.46" x2="679.57" y2="138.54" stroke="#101010" stroke-width="1"/><line x1="692.06" y1="138.71" x2="687.80" y2="136.08" stroke="#101010" stroke-width="0.9"/><line x1="695.12" y1="134.21" x2="691.11" y2="131.22" stroke="#101010" stroke-width="0.9"/><line x1="698.56" y1="130.00" x2="694.84" y2="126.66" stroke="#101010" stroke-width="0.9"/><line x1="702.37" y1="126.10" x2="698.95" y2="122.45" stroke="#101010" stroke-width="0.9"/><line x1="706.50" y1="122.56" x2="699.72" y2="113.90" stroke="#101010" stroke-width="1"/><line x1="710.93" y1="119.40" x2="708.21" y2="115.21" stroke="#101010" stroke-width="0.9"/><line x1="715.63" y1="116.65" x2="713.29" y2="112.23" stroke="#101010" stroke-width="0.9"/><line x1="720.54" y1="114.32" x2="718.60" y2="109.71" stroke="#101010" stroke-width="0.9"/><line x1="725.65" y1="112.43" x2="724.12" y2="107.67" stroke="#101010" stroke-width="0.9"/><line x1="730.90" y1="111.00" x2="728.49" y2="100.27" stroke="#101010" stroke-width="1"/><line x1="736.26" y1="110.04" x2="735.60" y2="105.09" stroke="#101010" stroke-width="0.9"/><line x1="741.68" y1="109.56" x2="741.46" y2="104.57" stroke="#101010" stroke-width="0.9"/><line x1="747.12" y1="109.56" x2="747.34" y2="104.57" stroke="#101010" stroke-width="0.9"/><line x1="752.54" y1="110.04" x2="753.20" y2="105.09" stroke="#101010" stroke-width="0.9"/><line x1="757.90" y1="111.00" x2="760.31" y2="100.27" stroke="#101010" stroke-width="1"/><line x1="763.15" y1="112.43" x2="764.68" y2="107.67" stroke="#101010" stroke-width="0.9"/><line x1="768.26" y1="114.32" x2="770.20" y2="109.71" stroke="#101010" stroke-width="0.9"/><line x1="773.17" y1="116.65" x2="775.51" y2="112.23" stroke="#101010" stroke-width="0.9"/><line x1="777.87" y1="119.40" x2="780.59" y2="115.21" stroke="#101010" stroke-width="0.9"/><line x1="782.30" y1="122.56" x2="789.08" y2="113.90" stroke="#101010" stroke-width="1"/><line x1="786.43" y1="126.10" x2="789.85" y2="122.45" stroke="#101010" stroke-width="0.9"/><line x1="790.24" y1="130.00" x2="793.96" y2="126.66" stroke="#101010" stroke-width="0.9"/><line x1="793.68" y1="134.21" x2="797.69" y2="131.22" stroke="#101010" stroke-width="0.9"/><line x1="796.74" y1="138.71" x2="801.00" y2="136.08" stroke="#101010" stroke-width="0.9"/><line x1="799.39" y1="143.46" x2="809.23" y2="138.54" stroke="#101010" stroke-width="1"/><text x="672.2" y="137.3" text-anchor="middle" font-family="Liberation Sans" font-weight="bold" font-size="10.6" fill="#111">1,0</text><text x="695.6" y="112" text-anchor="middle" font-family="Liberation Sans" font-weight="bold" font-size="10.6" fill="#111">1,6</text><text x="727" y="97.2" text-anchor="middle" font-family="Liberation Sans" font-weight="bold" font-size="10.6" fill="#111">2,2</text><text x="762.2" y="97.2" text-anchor="middle" font-family="Liberation Sans" font-weight="bold" font-size="10.6" fill="#111">2,8</text><text x="793.2" y="112" text-anchor="middle" font-family="Liberation Sans" font-weight="bold" font-size="10.6" fill="#111">3,4</text><text x="816.4" y="137.3" text-anchor="middle" font-family="Liberation Sans" font-weight="bold" font-size="10.6" fill="#111">4,0</text><text x="745" y="153.6" text-anchor="middle" font-family="Liberation Sans" font-weight="bold" font-size="10.5" fill="#111">BAR</text><path d="M722.45,102.43 L738.26,128.87 L724.93,133.13 Z" fill="#000"/></svg>
<div style="position:absolute;left:728px;top:161px;width:34.5px;height:21px;background:#ece9d8;border:1px solid #303030;"><div style="position:absolute;left:-1.5px;top:2.6px;width:100%;text-align:center;font-size:13.8px;line-height:1;color:#000;">2,08</div></div>
<div style="position:absolute;left:659px;top:207.5px;width:85px;height:190px;background:linear-gradient(90deg,#9a9a9a 0%,#c4c4c4 30%,#ececec 50%,#c4c4c4 70%,#9a9a9a 100%);border-left:1px solid #fff;border-right:1px solid #101010;border-bottom:2px solid #505048;"></div>
<div style="position:absolute;left:697.0px;top:234px;width:7px;height:141px;background:#dcdcd0;"></div>
<div style="position:absolute;left:699.25px;top:236px;width:2.5px;height:136px;background:#808080;"></div>
<div style="position:absolute;left:699.25px;top:273.504px;width:2.5px;height:98.49599999999998px;background:#e00000;"></div>
<div style="position:absolute;left:692.5px;top:237px;width:15px;height:1px;background:#383838;"></div>
<div style="position:absolute;left:661px;top:231.5px;width:29.5px;text-align:right;font-size:9.4px;line-height:1;color:#181818;">120</div>
<div style="position:absolute;left:710.5px;top:231.5px;font-size:9.4px;line-height:1;color:#181818;">120</div>
<div style="position:absolute;left:692.5px;top:246px;width:15px;height:1px;background:#383838;"></div>
<div style="position:absolute;left:661px;top:241.08px;width:29.5px;text-align:right;font-size:9.4px;line-height:1;color:#181818;">110</div>
<div style="position:absolute;left:710.5px;top:241.08px;font-size:9.4px;line-height:1;color:#181818;">110</div>
<div style="position:absolute;left:692.5px;top:256px;width:15px;height:1px;background:#383838;"></div>
<div style="position:absolute;left:661px;top:250.66px;width:29.5px;text-align:right;font-size:9.4px;line-height:1;color:#181818;">100</div>
<div style="position:absolute;left:710.5px;top:250.66px;font-size:9.4px;line-height:1;color:#181818;">100</div>
<div style="position:absolute;left:692.5px;top:265px;width:15px;height:1px;background:#383838;"></div>
<div style="position:absolute;left:661px;top:260.23999999999995px;width:29.5px;text-align:right;font-size:9.4px;line-height:1;color:#181818;">90</div>
<div style="position:absolute;left:710.5px;top:260.23999999999995px;font-size:9.4px;line-height:1;color:#181818;">90</div>
<div style="position:absolute;left:692.5px;top:275px;width:15px;height:1px;background:#383838;"></div>
<div style="position:absolute;left:661px;top:269.82px;width:29.5px;text-align:right;font-size:9.4px;line-height:1;color:#181818;">80</div>
<div style="position:absolute;left:710.5px;top:269.82px;font-size:9.4px;line-height:1;color:#181818;">80</div>
<div style="position:absolute;left:692.5px;top:284px;width:15px;height:1px;background:#383838;"></div>
<div style="position:absolute;left:661px;top:279.4px;width:29.5px;text-align:right;font-size:9.4px;line-height:1;color:#181818;">70</div>
<div style="position:absolute;left:710.5px;top:279.4px;font-size:9.4px;line-height:1;color:#181818;">70</div>
<div style="position:absolute;left:692.5px;top:294px;width:15px;height:1px;background:#383838;"></div>
<div style="position:absolute;left:661px;top:288.97999999999996px;width:29.5px;text-align:right;font-size:9.4px;line-height:1;color:#181818;">60</div>
<div style="position:absolute;left:710.5px;top:288.97999999999996px;font-size:9.4px;line-height:1;color:#181818;">60</div>
<div style="position:absolute;left:692.5px;top:304px;width:15px;height:1px;background:#383838;"></div>
<div style="position:absolute;left:661px;top:298.55999999999995px;width:29.5px;text-align:right;font-size:9.4px;line-height:1;color:#181818;">50</div>
<div style="position:absolute;left:710.5px;top:298.55999999999995px;font-size:9.4px;line-height:1;color:#181818;">50</div>
<div style="position:absolute;left:692.5px;top:313px;width:15px;height:1px;background:#383838;"></div>
<div style="position:absolute;left:661px;top:308.14px;width:29.5px;text-align:right;font-size:9.4px;line-height:1;color:#181818;">40</div>
<div style="position:absolute;left:710.5px;top:308.14px;font-size:9.4px;line-height:1;color:#181818;">40</div>
<div style="position:absolute;left:692.5px;top:323px;width:15px;height:1px;background:#383838;"></div>
<div style="position:absolute;left:661px;top:317.71999999999997px;width:29.5px;text-align:right;font-size:9.4px;line-height:1;color:#181818;">30</div>
<div style="position:absolute;left:710.5px;top:317.71999999999997px;font-size:9.4px;line-height:1;color:#181818;">30</div>
<div style="position:absolute;left:692.5px;top:332px;width:15px;height:1px;background:#383838;"></div>
<div style="position:absolute;left:661px;top:327.29999999999995px;width:29.5px;text-align:right;font-size:9.4px;line-height:1;color:#181818;">20</div>
<div style="position:absolute;left:710.5px;top:327.29999999999995px;font-size:9.4px;line-height:1;color:#181818;">20</div>
<div style="position:absolute;left:692.5px;top:342px;width:15px;height:1px;background:#383838;"></div>
<div style="position:absolute;left:661px;top:336.88px;width:29.5px;text-align:right;font-size:9.4px;line-height:1;color:#181818;">10</div>
<div style="position:absolute;left:710.5px;top:336.88px;font-size:9.4px;line-height:1;color:#181818;">10</div>
<div style="position:absolute;left:692.5px;top:352px;width:15px;height:1px;background:#383838;"></div>
<div style="position:absolute;left:661px;top:346.46px;width:29.5px;text-align:right;font-size:9.4px;line-height:1;color:#181818;">0</div>
<div style="position:absolute;left:710.5px;top:346.46px;font-size:9.4px;line-height:1;color:#181818;">0</div>
<div style="position:absolute;left:692.5px;top:361px;width:15px;height:1px;background:#383838;"></div>
<div style="position:absolute;left:661px;top:356.03999999999996px;width:29.5px;text-align:right;font-size:9.4px;line-height:1;color:#181818;">-10</div>
<div style="position:absolute;left:710.5px;top:356.03999999999996px;font-size:9.4px;line-height:1;color:#181818;">-10</div>
<div style="position:absolute;left:692.5px;top:371px;width:15px;height:1px;background:#383838;"></div>
<div style="position:absolute;left:661px;top:365.62px;width:29.5px;text-align:right;font-size:9.4px;line-height:1;color:#181818;">-20</div>
<div style="position:absolute;left:710.5px;top:365.62px;font-size:9.4px;line-height:1;color:#181818;">-20</div>
<div style="position:absolute;left:680px;top:212px;width:30.5px;height:15.5px;background:#ece9d8;border:1px solid #000;"><div style="position:absolute;right:5px;top:2.5px;font-size:11px;font-weight:bold;line-height:1;color:#000;">82</div></div>
<div style="position:absolute;left:713px;top:215px;font-size:10.2px;line-height:1;color:#000;font-weight:bold;white-space:nowrap;">°C</div>
<div style="position:absolute;left:659px;top:380px;width:84px;text-align:center;font-size:11.6px;font-weight:bold;letter-spacing:0.7px;line-height:1;color:#111;">ECT</div>
<div style="position:absolute;left:745.5px;top:207.5px;width:85.5px;height:190px;background:linear-gradient(90deg,#9a9a9a 0%,#c4c4c4 30%,#ececec 50%,#c4c4c4 70%,#9a9a9a 100%);border-left:1px solid #fff;border-right:1px solid #d0d0d0;border-bottom:2px solid #505048;"></div>
<div style="position:absolute;left:783.5px;top:234px;width:7px;height:141px;background:#dcdcd0;"></div>
<div style="position:absolute;left:785.75px;top:236px;width:2.5px;height:136px;background:#808080;"></div>
<div style="position:absolute;left:785.75px;top:313.74px;width:2.5px;height:58.25999999999999px;background:#e00000;"></div>
<div style="position:absolute;left:779.0px;top:237px;width:15px;height:1px;background:#383838;"></div>
<div style="position:absolute;left:747.5px;top:231.5px;width:29.5px;text-align:right;font-size:9.4px;line-height:1;color:#181818;">120</div>
<div style="position:absolute;left:797.0px;top:231.5px;font-size:9.4px;line-height:1;color:#181818;">120</div>
<div style="position:absolute;left:779.0px;top:246px;width:15px;height:1px;background:#383838;"></div>
<div style="position:absolute;left:747.5px;top:241.08px;width:29.5px;text-align:right;font-size:9.4px;line-height:1;color:#181818;">110</div>
<div style="position:absolute;left:797.0px;top:241.08px;font-size:9.4px;line-height:1;color:#181818;">110</div>
<div style="position:absolute;left:779.0px;top:256px;width:15px;height:1px;background:#383838;"></div>
<div style="position:absolute;left:747.5px;top:250.66px;width:29.5px;text-align:right;font-size:9.4px;line-height:1;color:#181818;">100</div>
<div style="position:absolute;left:797.0px;top:250.66px;font-size:9.4px;line-height:1;color:#181818;">100</div>
<div style="position:absolute;left:779.0px;top:265px;width:15px;height:1px;background:#383838;"></div>
<div style="position:absolute;left:747.5px;top:260.23999999999995px;width:29.5px;text-align:right;font-size:9.4px;line-height:1;color:#181818;">90</div>
<div style="position:absolute;left:797.0px;top:260.23999999999995px;font-size:9.4px;line-height:1;color:#181818;">90</div>
<div style="position:absolute;left:779.0px;top:275px;width:15px;height:1px;background:#383838;"></div>
<div style="position:absolute;left:747.5px;top:269.82px;width:29.5px;text-align:right;font-size:9.4px;line-height:1;color:#181818;">80</div>
<div style="position:absolute;left:797.0px;top:269.82px;font-size:9.4px;line-height:1;color:#181818;">80</div>
<div style="position:absolute;left:779.0px;top:284px;width:15px;height:1px;background:#383838;"></div>
<div style="position:absolute;left:747.5px;top:279.4px;width:29.5px;text-align:right;font-size:9.4px;line-height:1;color:#181818;">70</div>
<div style="position:absolute;left:797.0px;top:279.4px;font-size:9.4px;line-height:1;color:#181818;">70</div>
<div style="position:absolute;left:779.0px;top:294px;width:15px;height:1px;background:#383838;"></div>
<div style="position:absolute;left:747.5px;top:288.97999999999996px;width:29.5px;text-align:right;font-size:9.4px;line-height:1;color:#181818;">60</div>
<div style="position:absolute;left:797.0px;top:288.97999999999996px;font-size:9.4px;line-height:1;color:#181818;">60</div>
<div style="position:absolute;left:779.0px;top:304px;width:15px;height:1px;background:#383838;"></div>
<div style="position:absolute;left:747.5px;top:298.55999999999995px;width:29.5px;text-align:right;font-size:9.4px;line-height:1;color:#181818;">50</div>
<div style="position:absolute;left:797.0px;top:298.55999999999995px;font-size:9.4px;line-height:1;color:#181818;">50</div>
<div style="position:absolute;left:779.0px;top:313px;width:15px;height:1px;background:#383838;"></div>
<div style="position:absolute;left:747.5px;top:308.14px;width:29.5px;text-align:right;font-size:9.4px;line-height:1;color:#181818;">40</div>
<div style="position:absolute;left:797.0px;top:308.14px;font-size:9.4px;line-height:1;color:#181818;">40</div>
<div style="position:absolute;left:779.0px;top:323px;width:15px;height:1px;background:#383838;"></div>
<div style="position:absolute;left:747.5px;top:317.71999999999997px;width:29.5px;text-align:right;font-size:9.4px;line-height:1;color:#181818;">30</div>
<div style="position:absolute;left:797.0px;top:317.71999999999997px;font-size:9.4px;line-height:1;color:#181818;">30</div>
<div style="position:absolute;left:779.0px;top:332px;width:15px;height:1px;background:#383838;"></div>
<div style="position:absolute;left:747.5px;top:327.29999999999995px;width:29.5px;text-align:right;font-size:9.4px;line-height:1;color:#181818;">20</div>
<div style="position:absolute;left:797.0px;top:327.29999999999995px;font-size:9.4px;line-height:1;color:#181818;">20</div>
<div style="position:absolute;left:779.0px;top:342px;width:15px;height:1px;background:#383838;"></div>
<div style="position:absolute;left:747.5px;top:336.88px;width:29.5px;text-align:right;font-size:9.4px;line-height:1;color:#181818;">10</div>
<div style="position:absolute;left:797.0px;top:336.88px;font-size:9.4px;line-height:1;color:#181818;">10</div>
<div style="position:absolute;left:779.0px;top:352px;width:15px;height:1px;background:#383838;"></div>
<div style="position:absolute;left:747.5px;top:346.46px;width:29.5px;text-align:right;font-size:9.4px;line-height:1;color:#181818;">0</div>
<div style="position:absolute;left:797.0px;top:346.46px;font-size:9.4px;line-height:1;color:#181818;">0</div>
<div style="position:absolute;left:779.0px;top:361px;width:15px;height:1px;background:#383838;"></div>
<div style="position:absolute;left:747.5px;top:356.03999999999996px;width:29.5px;text-align:right;font-size:9.4px;line-height:1;color:#181818;">-10</div>
<div style="position:absolute;left:797.0px;top:356.03999999999996px;font-size:9.4px;line-height:1;color:#181818;">-10</div>
<div style="position:absolute;left:779.0px;top:371px;width:15px;height:1px;background:#383838;"></div>
<div style="position:absolute;left:747.5px;top:365.62px;width:29.5px;text-align:right;font-size:9.4px;line-height:1;color:#181818;">-20</div>
<div style="position:absolute;left:797.0px;top:365.62px;font-size:9.4px;line-height:1;color:#181818;">-20</div>
<div style="position:absolute;left:766.5px;top:212px;width:30.5px;height:15.5px;background:#ece9d8;border:1px solid #000;"><div style="position:absolute;right:5px;top:2.5px;font-size:11px;font-weight:bold;line-height:1;color:#000;">40</div></div>
<div style="position:absolute;left:799.5px;top:215px;font-size:10.2px;line-height:1;color:#000;font-weight:bold;white-space:nowrap;">°C</div>
<div style="position:absolute;left:745.5px;top:380px;width:84px;text-align:center;font-size:11.6px;font-weight:bold;letter-spacing:0.7px;line-height:1;color:#111;">LPG</div>
<div style="position:absolute;left:657px;top:397.5px;width:174px;height:24px;background:#f8f8ff;"></div>
<div style="position:absolute;left:661px;top:400.5px;width:170px;height:20.5px;background:linear-gradient(#f2f2f2,#c8c8c8 50%,#8a8a8a);border-right:1px solid #606060;"></div>
<div style="position:absolute;left:657px;top:421px;width:174px;height:2px;background:#0000c0;"></div>
<div style="position:absolute;left:658px;top:423px;width:173px;height:18.5px;background:#ece9d8;border-left:1.5px solid #000090;"><div style="position:absolute;left:0;top:0;width:2px;height:100%;background:#fff;"></div></div>
<div style="position:absolute;left:664.7px;top:428.2px;font-size:12.6px;line-height:1;color:#3a3a3a;font-weight:normal;white-space:nowrap;">Sensors</div>
<div style="position:absolute;left:658px;top:441.5px;width:173px;height:1.5px;background:#000090;"></div>
<div style="position:absolute;left:657px;top:443px;width:174px;height:2.5px;background:#f4f4ff;"></div>
<div style="position:absolute;left:659px;top:445.5px;width:172px;height:2.5px;background:#0000b0;"></div>
<div style="position:absolute;left:657.5px;top:448px;width:1.5px;height:172px;background:#f4f4ff;"></div>
<div style="position:absolute;left:659px;top:448px;width:2px;height:106px;background:#0000b0;"></div>
<div style="position:absolute;left:830px;top:448px;width:1px;height:172px;background:#9090c0;"></div>
<div style="position:absolute;left:661px;top:447.6px;width:160px;height:17.5px;background:#00ff00;border-top:1px solid #b0ffb0;"></div>
<div style="position:absolute;left:661px;top:450.20000000000005px;font-size:11px;line-height:1;color:#002000;font-weight:normal;white-space:nowrap;">19:Ti_max</div>
<div style="position:absolute;left:661px;top:465.1px;width:160px;height:17.5px;background:#00ff00;border-top:1px solid #b0ffb0;"></div>
<div style="position:absolute;left:661px;top:467.70000000000005px;font-size:11px;line-height:1;color:#002000;font-weight:normal;white-space:nowrap;">20:Ti_max</div>
<div style="position:absolute;left:661px;top:482.6px;width:160px;height:17.5px;background:#00ff00;border-top:1px solid #b0ffb0;"></div>
<div style="position:absolute;left:661px;top:485.20000000000005px;font-size:11px;line-height:1;color:#002000;font-weight:normal;white-space:nowrap;">13:OL_max</div>
<div style="position:absolute;left:661px;top:500.1px;width:160px;height:17.5px;background:#00ff00;border-top:1px solid #b0ffb0;"></div>
<div style="position:absolute;left:661px;top:502.70000000000005px;font-size:11px;line-height:1;color:#002000;font-weight:normal;white-space:nowrap;">14:OL_min</div>
<div style="position:absolute;left:661px;top:517.6px;width:160px;height:17.5px;background:#00ff00;border-top:1px solid #b0ffb0;"></div>
<div style="position:absolute;left:661px;top:520.2px;font-size:11px;line-height:1;color:#002000;font-weight:normal;white-space:nowrap;">11:Lamb_1</div>
<div style="position:absolute;left:661px;top:535.1px;width:160px;height:17.5px;background:#00ff00;border-top:1px solid #b0ffb0;"></div>
<div style="position:absolute;left:661px;top:537.7px;font-size:11px;line-height:1;color:#002000;font-weight:normal;white-space:nowrap;">12:Lamb_2</div>
<div style="position:absolute;left:708px;top:414.5px;width:280.5px;height:174px;border-radius:7px 7px 0 0;background:linear-gradient(90deg,#0a4fd8,#2a6af0 8%,#0058ee 50%,#0040c8 99%,#002a98 100%);"></div>
<div style="position:absolute;left:708px;top:586.3px;width:280.5px;height:2.2px;background:linear-gradient(#2058d8,#0028a0);"></div>
<div style="position:absolute;left:708px;top:414.5px;width:280px;height:23px;border-radius:7px 7px 0 0;background:linear-gradient(#3c8cf8 0%,#0a5ef0 15%,#0050e4 60%,#0048d8 90%,#0a3cb8 100%);"></div>
<div style="position:absolute;left:713.4px;top:424px;font-size:10.1px;line-height:1;color:#ffffff;font-weight:bold;white-space:nowrap;text-shadow:1px 1px 0 #0a246a;">Diagnostic Trouble Codes</div>
<div style="position:absolute;left:969px;top:419px;width:17px;height:17px;background:linear-gradient(135deg,#f09070,#e05030 50%,#c03818);border:1px solid #fff;border-radius:3px;"><svg style="position:absolute;left:2.5px;top:2.5px" width="10" height="10"><path d="M1 1 L9 9 M9 1 L1 9" stroke="#fff" stroke-width="1.8"/></svg></div>
<div style="position:absolute;left:711px;top:437.5px;width:275.7px;height:148.8px;background:#ece9d8;"></div>
<div style="position:absolute;left:714.5px;top:447.8px;width:269px;height:112.7px;border:1px solid #fcfcf4;background:#e4e1d0;"></div>
<div style="position:absolute;left:715.5px;top:448.8px;width:267px;height:110.7px;border-right:1px solid #fcfcf4;border-bottom:1px solid #fcfcf4;"></div>
<div style="position:absolute;left:716.5px;top:450.2px;width:263.5px;height:105.5px;background:#fff;border-top:2px solid #8a887c;border-left:2px solid #8a887c;border-right:1px solid #f4f4ec;border-bottom:1px solid #f4f4ec;"></div>
<div style="position:absolute;left:719.3px;top:454px;font-size:8.55px;line-height:1;color:#000;font-weight:normal;white-space:nowrap;">Fault251: Injector 5 noload</div>
<div style="position:absolute;left:719.3px;top:464px;font-size:8.55px;line-height:1;color:#000;font-weight:normal;white-space:nowrap;">Fault261: Injector 6 noload</div>
<div style="position:absolute;left:723px;top:563px;width:60px;height:20px;background:#ece9d8;border:1.5px solid #000;"><div style="position:absolute;left:0;top:4.8px;width:100%;text-align:center;font-size:9.8px;letter-spacing:-0.35px;line-height:1;color:#000;">OK</div><div style="position:absolute;left:3px;top:3px;right:3px;bottom:3px;border:1px dotted #202020;"></div></div>
<div style="position:absolute;left:790px;top:563px;width:61px;height:20px;background:linear-gradient(#fbfbf8,#ece9d8 70%,#dcd8c8);border:1px solid #fff;border-right-color:#8a8870;border-bottom-color:#8a8870;"><div style="position:absolute;left:0;top:4.8px;width:100%;text-align:center;font-size:9.8px;letter-spacing:-0.35px;line-height:1;color:#000;">Erase</div></div>
<div style="position:absolute;left:857px;top:563px;width:61px;height:20px;background:linear-gradient(#fbfbf8,#ece9d8 70%,#dcd8c8);border:1px solid #fff;border-right-color:#8a8870;border-bottom-color:#8a8870;"><div style="position:absolute;left:0;top:4.8px;width:100%;text-align:center;font-size:9.8px;letter-spacing:-0.35px;line-height:1;color:#000;">Help</div></div>
<svg style="position:absolute;left:870px;top:416px" width="13" height="18"><path d="M1.2 1.2 L1.2 13.5 L4.2 10.8 L6.6 15.8 L8.8 14.8 L6.5 9.9 L10.4 9.9 Z" fill="#fff" stroke="#000" stroke-width="1.2" stroke-linejoin="miter"/></svg>
<div style="position:absolute;left:0px;top:620px;width:1024px;height:2px;background:#4a78b4;"></div>
<div style="position:absolute;left:0px;top:622px;width:1024px;height:18px;background:#f2f2f2;border-bottom:1px solid #c0c0c0;border-left:1px solid #888;"></div>
<svg style="position:absolute;left:0;top:0" width="1024" height="640"><defs><linearGradient id="hg" x1="0" y1="0" x2="0" y2="1"><stop offset="0" stop-color="#a8d8f8"/><stop offset="1" stop-color="#4a98d8"/></linearGradient><linearGradient id="fg" x1="0" y1="0" x2="0" y2="1"><stop offset="0" stop-color="#8cc8f8"/><stop offset="1" stop-color="#2a80d0"/></linearGradient></defs><ellipse cx="820.6" cy="633.6" rx="5.6" ry="2.7" fill="url(#hg)" stroke="#3a78b0" stroke-width="0.7"/><ellipse cx="820.6" cy="630.2" rx="5.6" ry="2.7" fill="url(#hg)" stroke="#3a78b0" stroke-width="0.7"/><ellipse cx="820.6" cy="626.8000000000001" rx="5.6" ry="2.7" fill="url(#hg)" stroke="#3a78b0" stroke-width="0.7"/><ellipse cx="820.6" cy="626.8" rx="1.2" ry="0.6" fill="#2a5a90"/><circle cx="837.5" cy="630.3" r="6" fill="#e8eef8" stroke="#6878a0" stroke-width="0.9"/><path d="M833 628 Q835 625.5 838 626" stroke="#b8e0b0" stroke-width="1.2" fill="none"/><path d="M838 635 Q841 634 842 631" stroke="#d8c0e8" stroke-width="1.2" fill="none"/><circle cx="837.5" cy="630.3" r="1.2" fill="#303850"/><rect x="848.5" y="624.5" width="11.5" height="11.5" rx="1" fill="#e6e6e6" stroke="#c4c4c4" stroke-width="1"/><rect x="851.5" y="624.8" width="6" height="3.6" fill="#f8f8f8" stroke="#d0d0d0" stroke-width="0.6"/><rect x="850.8" y="631" width="7.5" height="4.4" fill="#f6f6f6"/><path d="M865.5 636 L874.5 626.5 L877 628.8 L868 637.5 Z" fill="#b0bcd8" stroke="#606c90" stroke-width="0.8"/><path d="M874.5 626.5 L876 624.5 L878.5 626.8 L877 628.8Z" fill="#fff" stroke="#808890" stroke-width="0.6"/><circle cx="874" cy="632.5" r="3.3" fill="#58c858" stroke="#209020" stroke-width="0.8"/><rect x="886.5" y="624.6" width="7" height="5.6" fill="#3a88e0" stroke="#c8ccd4" stroke-width="0.9"/><rect x="881.8" y="629.2" width="7.4" height="6.2" fill="#3a88e0" stroke="#c8ccd4" stroke-width="0.9"/><path d="M898.5 627 L902.5 626 L904 627 L910.6 627 L910.6 636 L898.5 636 Z" fill="url(#fg)" stroke="#2a70b8" stroke-width="0.7"/><rect x="916" y="624.5" width="11" height="11.5" rx="1" fill="#e8e8e8" stroke="#c8c8c8" stroke-dasharray="1 0.6"/><path d="M919.5 627 L919.5 631.5 Q921.5 633.5 923.5 631.5 L923.5 627" stroke="#b8b8b8" stroke-width="1.2" fill="none"/><rect x="932.5" y="624" width="1" height="14" fill="#c8c8c8"/><circle cx="945" cy="630.5" r="6" fill="#98a8d8" stroke="#6070a8" stroke-width="0.8"/><path d="M941 628 Q942.5 625.8 945 626" stroke="#fff" stroke-width="1" fill="none"/><path d="M945.5 625.5 L951 630.5 L945.5 636 L944 634.5 L948 630.5 L944 626.8Z" fill="#58d048" stroke="#2a9a2a" stroke-width="0.7"/><rect x="955.5" y="624.5" width="11.5" height="11.5" fill="#ece8d8" stroke="#5a5240" stroke-width="1.1"/><path d="M958 629.5 L961.2 634 L964.4 629.5 L962.6 629.5 L962.6 626.5 L959.8 626.5 L959.8 629.5 Z" fill="#48c840" stroke="#208020" stroke-width="0.6"/></svg>
<div style="position:absolute;left:970px;top:624.8px;font-size:12.3px;line-height:1;color:#000;font-weight:normal;white-space:nowrap;">Ctrl droite</div>
</body></html>
